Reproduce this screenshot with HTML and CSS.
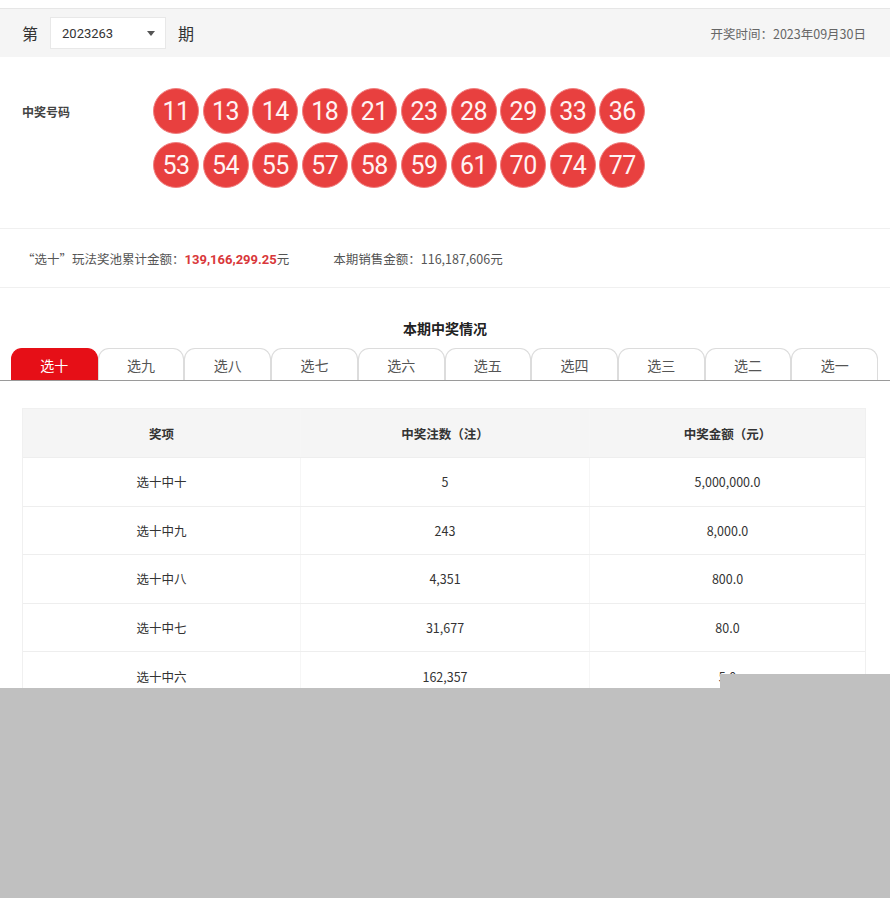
FILE: index.html
```html
<!DOCTYPE html>
<html lang="zh-CN">
<head>
<meta charset="utf-8">
<title>开奖公告</title>
<link rel="stylesheet" href="styles.css">
</head>
<body>
<div class="page">
  <div class="topline"></div>
  <div class="issue-bar">
    <div class="issue-left">
      <span class="issue-word">第</span>
      <div class="select"><span>2023263</span><span class="caret"></span></div>
      <span class="issue-word">期</span>
    </div>
    <div class="draw-time">开奖时间：2023年09月30日</div>
  </div>

  <div class="numbers">
    <div class="numbers-label">中奖号码</div>
    <div class="balls">
      <span class="ball">11</span><span class="ball">13</span><span class="ball">14</span><span class="ball">18</span><span class="ball">21</span><span class="ball">23</span><span class="ball">28</span><span class="ball">29</span><span class="ball">33</span><span class="ball">36</span>
      <span class="ball">53</span><span class="ball">54</span><span class="ball">55</span><span class="ball">57</span><span class="ball">58</span><span class="ball">59</span><span class="ball">61</span><span class="ball">70</span><span class="ball">74</span><span class="ball">77</span>
    </div>
  </div>

  <div class="pool">
    <span>“选十”玩法奖池累计金额：<b class="red">139,166,299.25</b>元</span>
    <span class="sales">本期销售金额：116,187,606元</span>
  </div>

  <div class="section-title">本期中奖情况</div>
  <div class="tabs">
    <div class="tab active">选十</div>
    <div class="tab">选九</div>
    <div class="tab">选八</div>
    <div class="tab">选七</div>
    <div class="tab">选六</div>
    <div class="tab">选五</div>
    <div class="tab">选四</div>
    <div class="tab">选三</div>
    <div class="tab">选二</div>
    <div class="tab">选一</div>
  </div>

  <div class="table-wrap">
    <div class="table">
      <div class="row head"><div>奖项</div><div>中奖注数（注）</div><div>中奖金额（元）</div></div>
      <div class="row"><div>选十中十</div><div>5</div><div>5,000,000.0</div></div>
      <div class="row"><div>选十中九</div><div>243</div><div>8,000.0</div></div>
      <div class="row"><div>选十中八</div><div>4,351</div><div>800.0</div></div>
      <div class="row"><div>选十中七</div><div>31,677</div><div>80.0</div></div>
      <div class="row"><div>选十中六</div><div>162,357</div><div>5.0</div></div>
      <div class="row"><div>选十中五</div><div>—</div><div>—</div></div>
    </div>
  </div>

  <div class="mask-side"></div>
  <div class="mask-bottom"></div>
</div>
</body>
</html>
```

FILE: styles.css
```css
html, body {
  margin: 0;
  padding: 0;
  background: #ffffff;
}
body {
  font-family: "Noto Sans CJK SC", "Noto Sans", sans-serif;
  color: #333;
  width: 890px;
  height: 898px;
  overflow: hidden;
}
.page {
  position: relative;
  width: 890px;
  height: 898px;
  overflow: hidden;
}
.topline {
  height: 8px;
  border-bottom: 1px solid #e6e6e6;
}
.issue-bar {
  height: 48px;
  background: #f5f5f5;
  display: flex;
  align-items: center;
  justify-content: space-between;
  padding: 0 24px 0 22px;
}
.issue-left {
  display: flex;
  align-items: center;
  gap: 12px;
}
.issue-word {
  font-size: 16px;
  color: #333;
}
.select {
  width: 116px;
  height: 32px;
  box-sizing: border-box;
  background: #fff;
  border: 1px solid #e8e8e8;
  display: flex;
  align-items: center;
  justify-content: space-between;
  padding: 0 10px 0 11px;
  font-family: "Roboto", "Noto Sans", sans-serif;
  font-size: 13px;
  color: #333;
}
.caret {
  width: 0;
  height: 0;
  border-left: 4px solid transparent;
  border-right: 4px solid transparent;
  border-top: 5px solid #555;
}
.draw-time {
  font-size: 12.5px;
  color: #666;
}
.numbers {
  display: flex;
  padding: 31px 0 40px 22px;
  border-bottom: 1px solid #f0f0f0;
}
.numbers-label {
  width: 131px;
  font-size: 12px;
  font-weight: bold;
  color: #444;
  padding-top: 15px;
}
.balls {
  width: 500px;
  display: flex;
  flex-wrap: wrap;
  column-gap: 3.6px;
  row-gap: 8px;
}
.ball {
  width: 46px;
  height: 46px;
  box-sizing: border-box;
  border-radius: 50%;
  background: #e8403f;
  border: 1px solid #f08080;
  color: #fff3f3;
  font-family: "Roboto", "Noto Sans", sans-serif;
  font-size: 25px;
  display: flex;
  align-items: center;
  justify-content: center;
  letter-spacing: -0.5px;
}
.pool {
  height: 58px;
  display: flex;
  align-items: center;
  padding-left: 22px;
  gap: 44px;
  font-size: 12.5px;
  color: #555;
  border-bottom: 1px solid #f0f0f0;
}
.red {
  color: #d9383a;
  font-weight: bold;
  font-family: "Roboto", "Noto Sans", sans-serif;
  font-size: 13px;
}
.section-title {
  text-align: center;
  font-size: 14px;
  font-weight: bold;
  color: #222;
  padding-top: 30px;
  height: 30px;
}
.tabs {
  display: flex;
  padding: 0 12px 0 11px;
  border-bottom: 1px solid #9a9a9a;
}
.tab {
  flex: 1;
  height: 32px;
  box-sizing: border-box;
  border: 1px solid #dcdcdc;
  border-bottom: none;
  border-radius: 11px 11px 0 0;
  display: flex;
  align-items: center;
  justify-content: center;
  font-size: 14px;
  color: #555;
  background: #fff;
}
.tab.active {
  background: #e60f17;
  border-color: #e60f17;
  color: #fff;
}
.table-wrap {
  padding: 27px 24px 0 22px;
}
.table {
  border: 1px solid #f0f0f0;
}
.row {
  display: grid;
  grid-template-columns: 278px 289px 1fr;
  box-sizing: border-box;
  height: 48.6px;
  border-bottom: 1px solid #eeeeee;
  font-size: 12.5px;
  color: #333;
}
.row > div {
  display: flex;
  align-items: center;
  justify-content: center;
  border-right: 1px solid #f6f6f6;
}
.row > div:last-child {
  border-right: none;
}
.row.head {
  height: 49px;
  background: #f5f5f5;
  font-weight: bold;
  color: #333;
}
.mask-side {
  position: absolute;
  left: 720px;
  top: 674px;
  width: 170px;
  height: 30px;
  background: #c0c0c0;
}
.mask-bottom {
  position: absolute;
  left: 0;
  top: 688px;
  width: 890px;
  height: 210px;
  background: #c0c0c0;
}
```
